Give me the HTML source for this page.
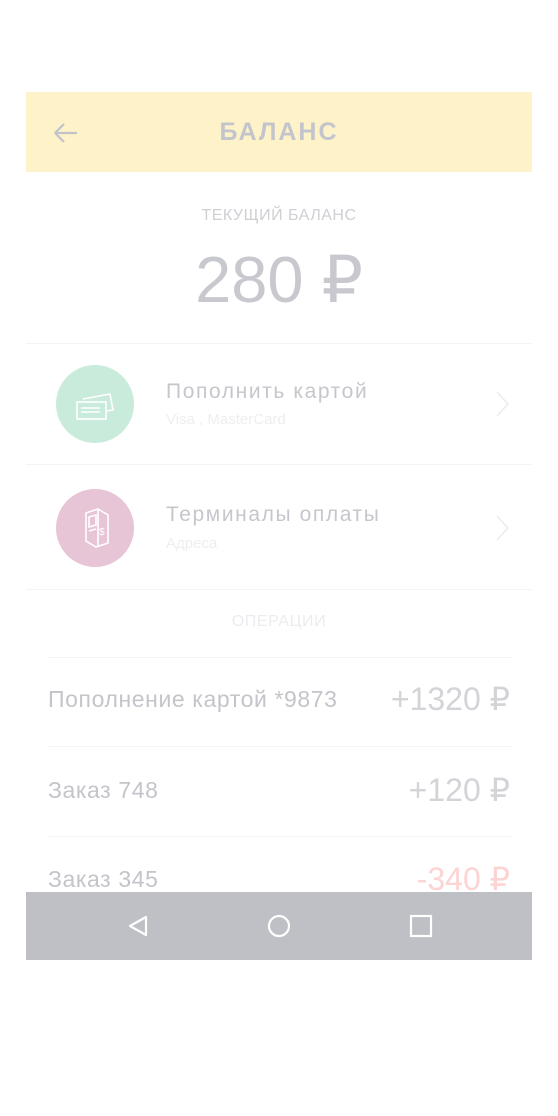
<!DOCTYPE html>
<html><head><meta charset="utf-8"><style>
*{margin:0;padding:0;box-sizing:border-box}
body{width:558px;height:1116px;background:#fff;position:relative;overflow:hidden;font-family:"Liberation Sans",sans-serif}
.a{position:absolute}
.hr{position:absolute;height:1px;background:#f4f4f6}
</style></head><body>
<div class="a" style="left:26px;top:92px;width:506px;height:80px;background:#fdf2c8"></div>
<svg class="a" style="left:52px;top:121px" width="28" height="24" viewBox="0 0 28 24"><path d="M3 12H25M3 12L12 3M3 12L12 21" stroke="#c2c2ca" stroke-width="2.2" fill="none"/></svg>
<div class="a" style="left:26px;width:506px;top:118px;text-align:center;font-size:25px;font-weight:bold;letter-spacing:2px;color:#c4c4cc">БАЛАНС</div>
<div class="a" style="left:26px;width:506px;top:207px;text-align:center;font-size:16px;letter-spacing:0.5px;color:#cfcfd4">ТЕКУЩИЙ БАЛАНС</div>
<div class="a" style="left:26px;width:506px;top:242px;text-align:center;font-size:65px;color:#c8c8cf">280 ₽</div>
<div class="hr" style="left:26px;width:506px;top:343px"></div>
<div class="a" style="left:56px;top:365px;width:78px;height:78px;border-radius:50%;background:#c8ebdb"></div>
<svg class="a" style="left:70px;top:380px" width="50" height="50" viewBox="0 0 50 50" fill="none" stroke="#fff" stroke-width="1.6"><path d="M13 19L40 14L43 30L36 31"/><rect x="7" y="22" width="29" height="17"/><path d="M11 28H30M11 32H30"/></svg>
<div class="a" style="left:166px;top:380px;font-size:21px;letter-spacing:1.6px;color:#c6c6cc">Пополнить картой</div>
<div class="a" style="left:166px;top:411px;font-size:15px;color:#eeeef0">Visa , MasterCard</div>
<svg class="a" style="left:495px;top:390px" width="16" height="28"><path d="M2 2L13 14L2 26" stroke="#ececee" stroke-width="1.5" fill="none"/></svg>
<div class="hr" style="left:26px;width:506px;top:464px"></div>
<div class="a" style="left:56px;top:489px;width:78px;height:78px;border-radius:50%;background:#e7c4d6"></div>
<svg class="a" style="left:70px;top:503px" width="50" height="50" viewBox="0 0 50 50" fill="none" stroke="#fff" stroke-width="1.6"><path d="M16 10L28 6L38 12V40L26 44L16 38Z"/><path d="M28 6V44M19 14L26 12V22L19 24Z"/><path d="M19 28L26 26"/><text x="29" y="32" font-size="10" fill="#fff" stroke="none">$</text></svg>
<div class="a" style="left:166px;top:503px;font-size:21px;letter-spacing:1.6px;color:#c6c6cc">Терминалы оплаты</div>
<div class="a" style="left:166px;top:535px;font-size:15px;color:#eeeef0">Адреса</div>
<svg class="a" style="left:495px;top:514px" width="16" height="28"><path d="M2 2L13 14L2 26" stroke="#ececee" stroke-width="1.5" fill="none"/></svg>
<div class="hr" style="left:26px;width:506px;top:589px"></div>
<div class="a" style="left:26px;width:506px;top:613px;text-align:center;font-size:16px;letter-spacing:0.6px;color:#ececf0">ОПЕРАЦИИ</div>
<div class="hr" style="left:48px;width:464px;top:657px"></div>
<div class="a" style="left:48px;top:686px;font-size:23px;letter-spacing:0.6px;color:#c4c4ca">Пополнение картой *9873</div>
<div class="a" style="right:48px;top:680px;font-size:32px;color:#d4d4d8">+1320 ₽</div>
<div class="hr" style="left:48px;width:464px;top:746px"></div>
<div class="a" style="left:48px;top:777px;font-size:23px;letter-spacing:0.6px;color:#c4c4ca">Заказ 748</div>
<div class="a" style="right:48px;top:771px;font-size:32px;color:#d4d4d8">+120 ₽</div>
<div class="hr" style="left:48px;width:464px;top:836px"></div>
<div class="a" style="left:48px;top:866px;font-size:23px;letter-spacing:0.6px;color:#c4c4ca">Заказ 345</div>
<div class="a" style="right:48px;top:860px;font-size:32px;color:#fcd4d4">-340 ₽</div>
<div class="a" style="left:26px;top:892px;width:506px;height:68px;background:#bfc0c5"></div>
<svg class="a" style="left:126px;top:914px" width="24" height="24"><path d="M20 3L4 12L20 21Z" stroke="#fff" stroke-width="2.2" fill="none" stroke-linejoin="round"/></svg>
<svg class="a" style="left:267px;top:914px" width="24" height="24"><circle cx="12" cy="12" r="10" stroke="#fff" stroke-width="2.2" fill="none"/></svg>
<svg class="a" style="left:409px;top:914px" width="24" height="24"><rect x="2" y="2" width="20" height="20" stroke="#fff" stroke-width="2.2" fill="none"/></svg>
</body></html>
